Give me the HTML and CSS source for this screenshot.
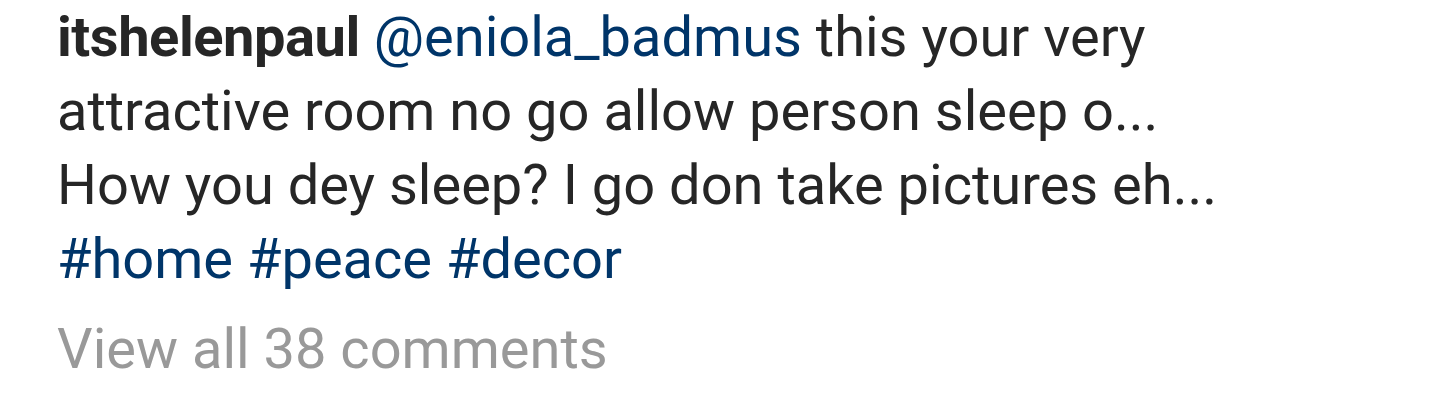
FILE: index.html
```html
<!DOCTYPE html>
<html>
<head>
<meta charset="utf-8">
<link rel="stylesheet" href="styles.css">
</head>
<body>
<div class="post">
  <div class="caption">
    <span class="line"><span class="user">itshelenpaul</span> <span class="link">@eniola_badmus</span> this your very</span>
    <span class="line">attractive room no go allow person sleep o...</span>
    <span class="line">How you dey sleep? I go don take pictures eh...</span>
    <span class="line"><span class="link">#home</span> <span class="link">#peace</span> <span class="link">#decor</span></span>
  </div>
  <div class="comments">View all 38 comments</div>
</div>
</body>
</html>
```
FILE: styles.css
```css
html, body {
  margin: 0;
  padding: 0;
  background: #ffffff;
}
body {
  width: 1440px;
  height: 405px;
  overflow: hidden;
  font-family: Roboto, "Noto Sans", sans-serif;
}
.post {
  padding: 0 0 0 57px;
  display: flex;
  flex-direction: column;
}
.caption {
  display: flex;
  flex-direction: column;
  color: #262626;
  font-size: 56px;
  line-height: 74px;
}
.line {
  white-space: nowrap;
}
.user {
  font-weight: 700;
  letter-spacing: -0.45px;
}
.link {
  color: #003569;
}
.comments {
  color: #999999;
  font-size: 56px;
  line-height: 74px;
  margin-top: 16px;
}
```
